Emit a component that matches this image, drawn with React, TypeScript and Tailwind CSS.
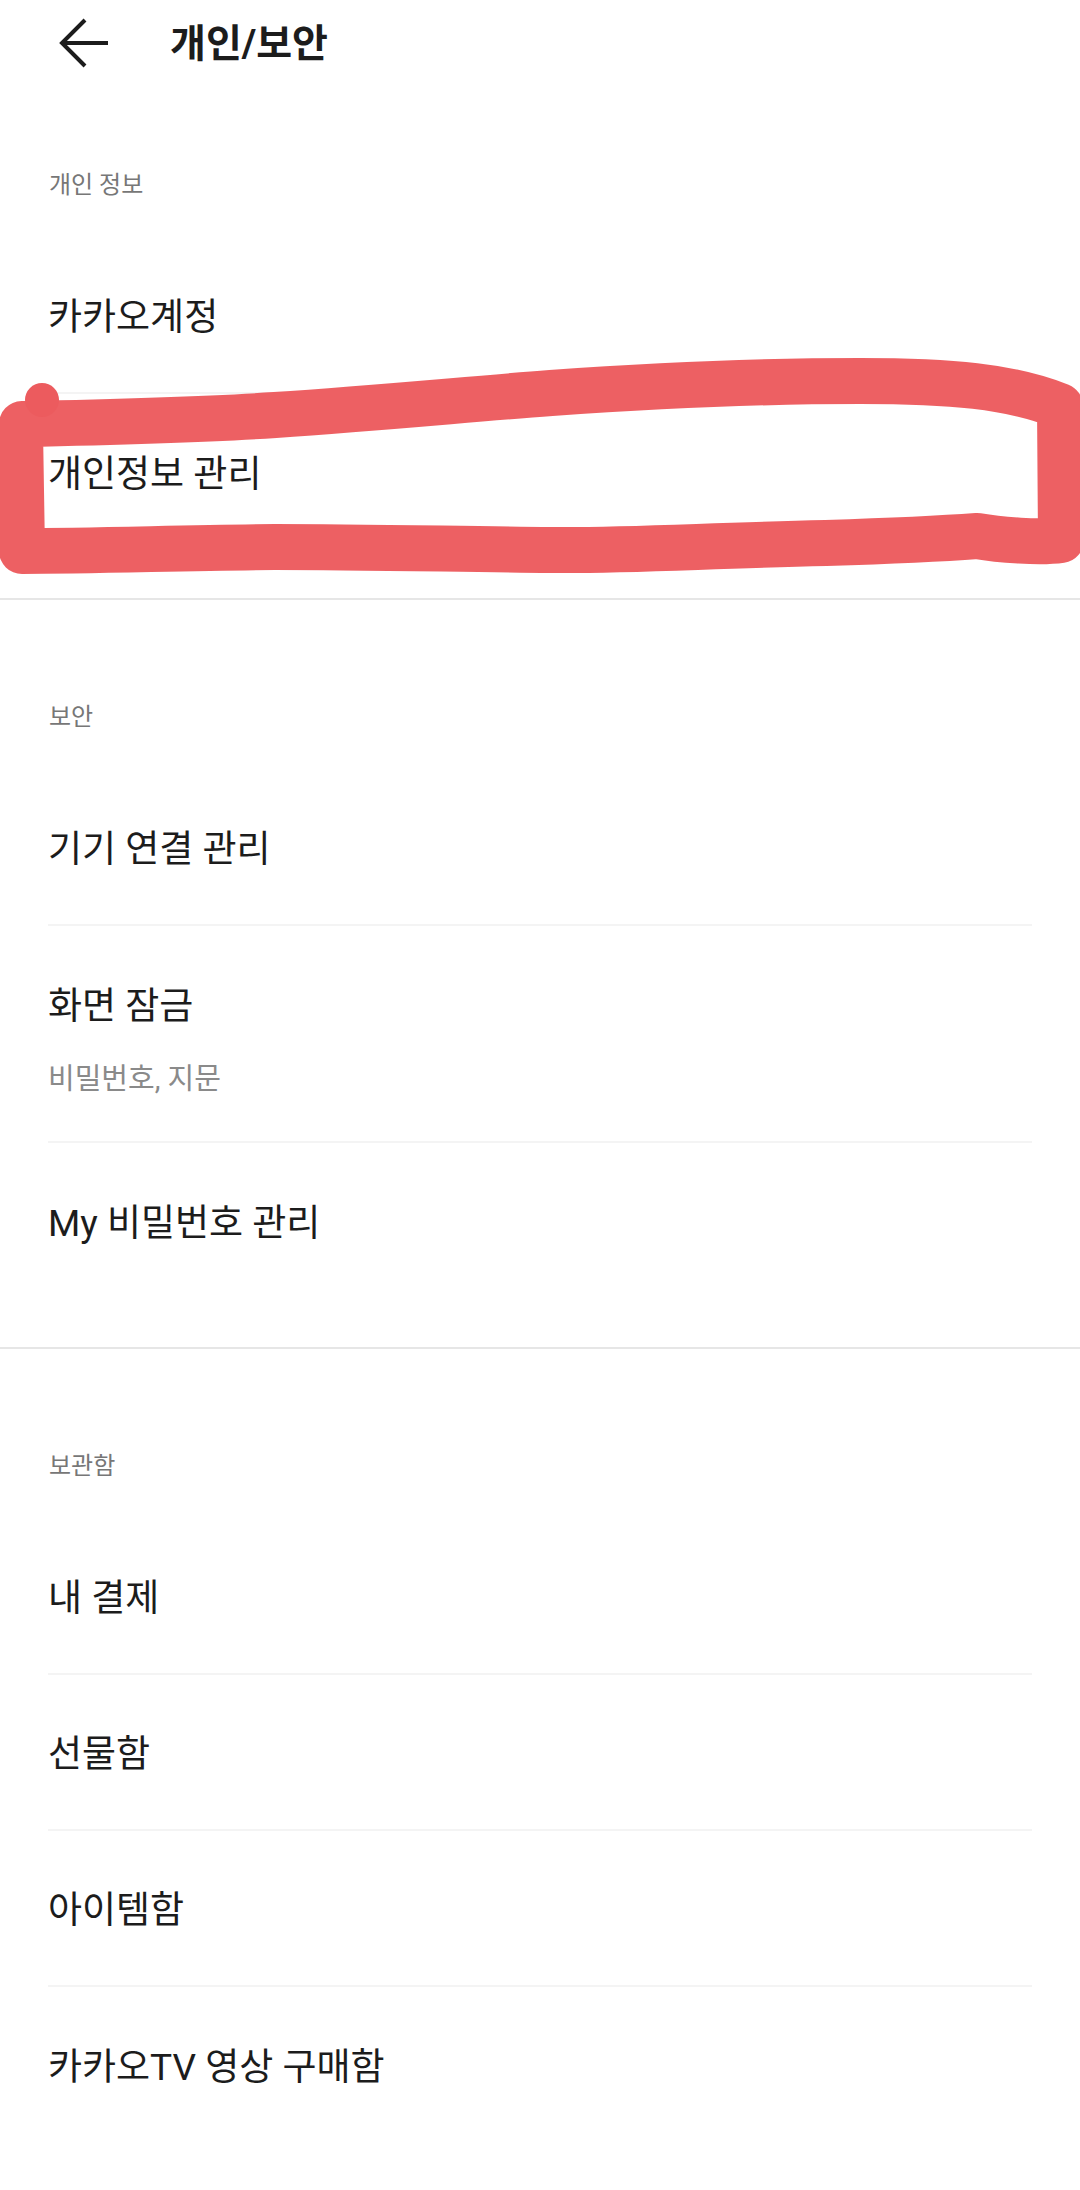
import { ReactNode } from "react";

const font = { fontFamily: '"Roboto", "Noto Sans CJK KR", sans-serif' };

type Item = { title: string; sub?: string };

const sections: { label: string; items: Item[] }[] = [
  {
    label: "개인 정보",
    items: [{ title: "카카오계정" }, { title: "개인정보 관리" }],
  },
  {
    label: "보안",
    items: [
      { title: "기기 연결 관리" },
      { title: "화면 잠금", sub: "비밀번호, 지문" },
      { title: "My 비밀번호 관리" },
    ],
  },
  {
    label: "보관함",
    items: [
      { title: "내 결제" },
      { title: "선물함" },
      { title: "아이템함" },
      { title: "카카오TV 영상 구매함" },
    ],
  },
];

function Row({ item, last }: { item: Item; last: boolean }) {
  const border = last ? "" : "border-b-2 border-[#f4f4f4]";
  if (item.sub) {
    return (
      <div className={`mx-[48px] h-[217px] pt-[61px] ${border}`}>
        <div className="text-[37px] leading-[40px] text-[#1c1c1c]">{item.title}</div>
        <div className="mt-[37px] text-[29px] leading-[30px] text-[#8a8a8a]">{item.sub}</div>
      </div>
    );
  }
  return (
    <div className={`mx-[48px] flex h-[156px] items-center pt-[6px] ${border}`}>
      <span className="text-[37px] leading-[40px] text-[#1c1c1c]">{item.title}</span>
    </div>
  );
}

function Section({ label, children, first }: { label: string; children: ReactNode; first?: boolean }) {
  return (
    <section className={first ? "pt-[81px] pb-[48px]" : "border-t-2 border-[#e6e6e6] pt-[101px] pb-[48px]"}>
      <div className="mb-[37px] h-[32px] px-[49px] text-[24px] leading-[32px] text-[#777777]">{label}</div>
      {children}
    </section>
  );
}

export default function App() {
  return (
    <main className="relative min-h-[2190px] w-[1080px] overflow-hidden bg-white" style={font}>
      <header className="flex h-[88px] items-center">
        <div className="flex w-[170px] pl-[58px]">
          <svg width="52" height="52" viewBox="0 0 52 52" fill="none">
            <path d="M50 25H4M27 2L4 25L27 48" stroke="#1c1c1c" strokeWidth="4" />
          </svg>
        </div>
        <h1 className="text-[39px] font-bold leading-[44px] text-[#1c1c1c]">개인/보안</h1>
      </header>

      {sections.map((s, i) => (
        <Section key={s.label} label={s.label} first={i === 0}>
          {s.items.map((item, j) => (
            <Row key={item.title} item={item} last={j === s.items.length - 1} />
          ))}
        </Section>
      ))}

      {/* hand-drawn red marker around 개인정보 관리 */}
      <svg
        className="pointer-events-none absolute left-0 top-0"
        width="1080"
        height="620"
        viewBox="0 0 1080 620"
        fill="none"
      >
        <g stroke="#ec5b5e" strokeWidth="46" strokeLinecap="round" strokeLinejoin="round" opacity="0.97">
          <path d="M22 424 C120 422 200 420 275 415 C380 408 460 400 551 393 C650 386 760 381 860 381 C950 381 1010 386 1060 406 L1061 540 C1040 543 1000 540 977 536 C950 538 920 540 826 543 C700 546 620 551 551 550 C450 549 360 547 275 547 C180 548 90 551 22 551 L20 430" />
        </g>
        <circle cx="42" cy="400" r="17" fill="#ec5b5e" />
      </svg>
    </main>
  );
}
